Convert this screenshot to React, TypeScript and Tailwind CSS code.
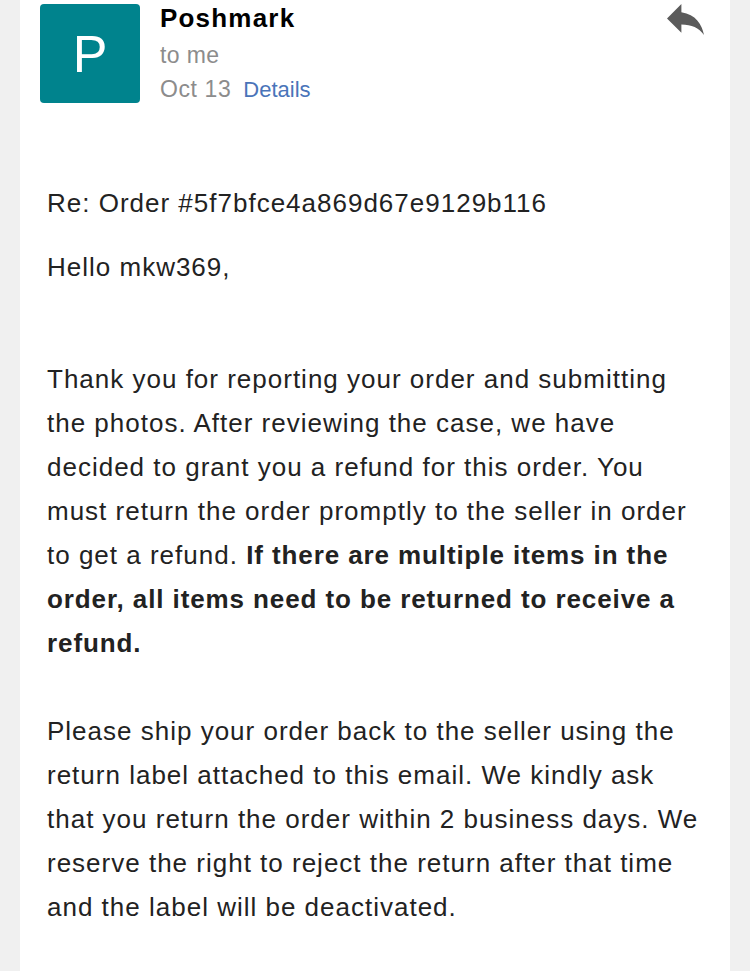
const font = "font-['Liberation_Sans',Arial,sans-serif]";

const ReplyIcon = () => (
  <svg width="37" height="31" viewBox="3 5 18 15" fill="#5b5b5b" aria-hidden="true">
    <path d="M10 9V5l-7 7 7 7v-4.1c5 0 8.5 1.6 11 5.1-1-5-4-10-11-11z" />
  </svg>
);

export default function App() {
  return (
    <div className={`min-h-screen w-[750px] bg-[#f0f0f0] px-[20px] ${font}`}>
      <div className="h-[971px] overflow-hidden bg-white">
        {/* Sender header */}
        <div className="flex items-start pl-[20px] pr-[26px] pt-[4px]">
          <div className="flex h-[99px] w-[100px] shrink-0 items-center justify-center rounded-[4px] bg-[#00838d]">
            <span className="text-[52px] font-light leading-none text-white">P</span>
          </div>
          <div className="ml-[20px] flex flex-1 flex-col">
            <span className="text-[26px] font-bold leading-[29px] tracking-[1.2px] text-black">Poshmark</span>
            <span className="mt-[5px] text-[23px] leading-[34px] tracking-[0.4px] text-[#8c8c8c]">to me</span>
            <div className="text-[23px] leading-[34px]">
              <span className="tracking-[0.6px] text-[#8c8c8c]">Oct 13</span>
              <span className="ml-[12px] text-[22px] text-[#4a74b9]">Details</span>
            </div>
          </div>
          <ReplyIcon />
        </div>

        {/* Message body */}
        <div className="w-[681px] pl-[27px] pt-[74px] text-[26px] leading-[44px] tracking-[1px] text-[#222222]">
          <p>Re: Order #5f7bfce4a869d67e9129b116</p>
          <p className="mt-[20px]">Hello mkw369,</p>
          <p className="mt-[68px]">
            Thank you for reporting your order and submitting the photos. After reviewing the case,
            we have decided to grant you a refund for this order. You must return the order promptly
            to the seller in order to get a refund.{" "}
            <b className="font-bold tracking-[0.9px]">
              If there are multiple items in the order, all items need to be returned to receive a
              refund.
            </b>
          </p>
          <p className="mt-[44px]">
            Please ship your order back to the seller using the return label attached to this email.
            We kindly ask that you return the order within 2 business days. We reserve the right to
            reject the return after that time and the label will be deactivated.
          </p>
        </div>
      </div>
    </div>
  );
}
